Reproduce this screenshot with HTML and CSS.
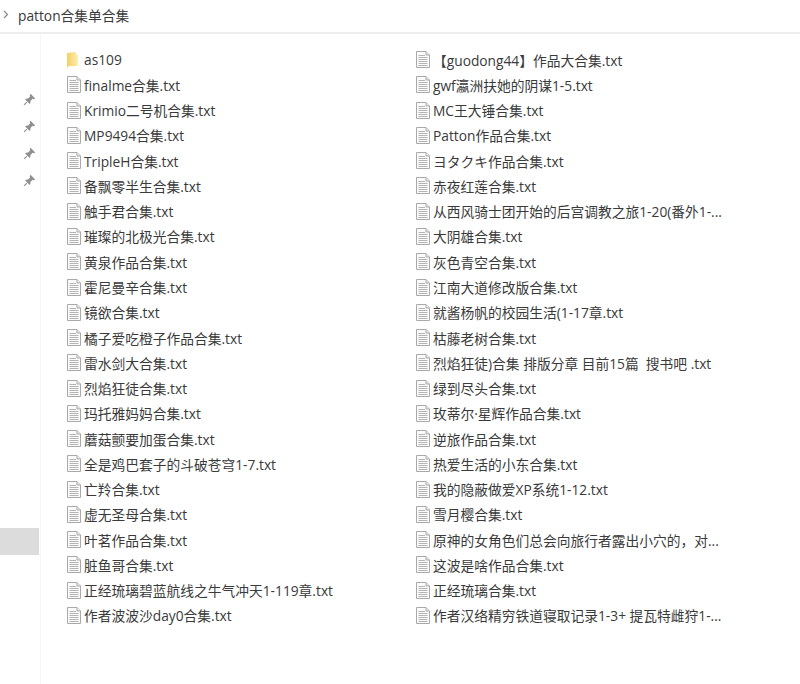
FILE: index.html
```html
<!DOCTYPE html>
<html lang="zh-CN">

<head>
    <meta charset="UTF-8" />
    <title>patton合集单合集</title>
    <link rel="stylesheet" href="styles.css">
</head>

<body>
    <svg class="defs" width="0" height="0">
        <symbol id="txt" viewBox="0 0 14 17">
            <path d="M1 .5H10L13.5 4V16.5H.5V.5Z" fill="#fbfbfb" stroke="#a9a9a9" />
            <path d="M10 .5V4H13.5" fill="#e8e8e8" stroke="#a9a9a9" />
            <path d="M2.5 4.5H9M2.5 6.5H11.5M2.5 8.5H11.5M2.5 10.5H11.5M2.5 12.5H11.5M2.5 14.5H11.5" stroke="#b4b4b4" />
        </symbol>
        <symbol id="pin" viewBox="0 0 12 12">
            <path d="M7 .8L11.2 5 10 5.8 8.9 5.3 6.9 7.3 6.8 9.4 5.9 10 2 6.1 2.7 5.2 4.7 5.1 6.7 3.1 6.2 2Z" fill="#8f8f8f" />
            <path d="M3.6 8.4L1 11" stroke="#8f8f8f" fill="none" />
        </symbol>
    </svg>

    <header class="crumb">
        <svg class="chevron" width="6" height="9" viewBox="0 0 6 9">
            <path d="M1 1L4.5 4.5 1 8" fill="none" stroke="#8a8a8a" stroke-width="1.2" />
        </svg>
        <span class="crumb-title">patton合集单合集</span>
    </header>

    <div class="main">
        <aside class="side">
            <svg class="pin"><use href="#pin" /></svg>
            <svg class="pin"><use href="#pin" /></svg>
            <svg class="pin"><use href="#pin" /></svg>
            <svg class="pin"><use href="#pin" /></svg>
            <div class="side-active"></div>
        </aside>

        <ul class="files">
            <li class="file">
                <svg class="folder" viewBox="0 0 11 16">
                    <defs>
                        <linearGradient id="fold">
                            <stop offset="0" stop-color="#f4cf62" />
                            <stop offset="1" stop-color="#fdeeb2" />
                        </linearGradient>
                    </defs>
                    <path d="M0 1L9 0V2.500H11V14H2L0 16Z" fill="url(#fold)" />
                </svg>
                <span>as109</span>
            </li>
            <li class="file"><svg class="icon"><use href="#txt" /></svg><span>finalme合集.txt</span></li>
            <li class="file"><svg class="icon"><use href="#txt" /></svg><span>Krimio二号机合集.txt</span></li>
            <li class="file"><svg class="icon"><use href="#txt" /></svg><span>MP9494合集.txt</span></li>
            <li class="file"><svg class="icon"><use href="#txt" /></svg><span>TripleH合集.txt</span></li>
            <li class="file"><svg class="icon"><use href="#txt" /></svg><span>备飘零半生合集.txt</span></li>
            <li class="file"><svg class="icon"><use href="#txt" /></svg><span>触手君合集.txt</span></li>
            <li class="file"><svg class="icon"><use href="#txt" /></svg><span>璀璨的北极光合集.txt</span></li>
            <li class="file"><svg class="icon"><use href="#txt" /></svg><span>黄泉作品合集.txt</span></li>
            <li class="file"><svg class="icon"><use href="#txt" /></svg><span>霍尼曼辛合集.txt</span></li>
            <li class="file"><svg class="icon"><use href="#txt" /></svg><span>镜欲合集.txt</span></li>
            <li class="file"><svg class="icon"><use href="#txt" /></svg><span>橘子爱吃橙子作品合集.txt</span></li>
            <li class="file"><svg class="icon"><use href="#txt" /></svg><span>雷水剑大合集.txt</span></li>
            <li class="file"><svg class="icon"><use href="#txt" /></svg><span>烈焰狂徒合集.txt</span></li>
            <li class="file"><svg class="icon"><use href="#txt" /></svg><span>玛托雅妈妈合集.txt</span></li>
            <li class="file"><svg class="icon"><use href="#txt" /></svg><span>蘑菇颤要加蛋合集.txt</span></li>
            <li class="file"><svg class="icon"><use href="#txt" /></svg><span>全是鸡巴套子的斗破苍穹1-7.txt</span></li>
            <li class="file"><svg class="icon"><use href="#txt" /></svg><span>亡羚合集.txt</span></li>
            <li class="file"><svg class="icon"><use href="#txt" /></svg><span>虚无圣母合集.txt</span></li>
            <li class="file"><svg class="icon"><use href="#txt" /></svg><span>叶茗作品合集.txt</span></li>
            <li class="file"><svg class="icon"><use href="#txt" /></svg><span>脏鱼哥合集.txt</span></li>
            <li class="file"><svg class="icon"><use href="#txt" /></svg><span>正经琉璃碧蓝航线之牛气冲天1-119章.txt</span></li>
            <li class="file"><svg class="icon"><use href="#txt" /></svg><span>作者波波沙day0合集.txt</span></li>

            <li class="file"><svg class="icon"><use href="#txt" /></svg><span>【guodong44】作品大合集.txt</span></li>
            <li class="file"><svg class="icon"><use href="#txt" /></svg><span>gwf瀛洲扶她的阴谋1-5.txt</span></li>
            <li class="file"><svg class="icon"><use href="#txt" /></svg><span>MC王大锤合集.txt</span></li>
            <li class="file"><svg class="icon"><use href="#txt" /></svg><span>Patton作品合集.txt</span></li>
            <li class="file"><svg class="icon"><use href="#txt" /></svg><span>ヨタクキ作品合集.txt</span></li>
            <li class="file"><svg class="icon"><use href="#txt" /></svg><span>赤夜红莲合集.txt</span></li>
            <li class="file"><svg class="icon"><use href="#txt" /></svg><span>从西风骑士团开始的后宫调教之旅1-20(番外1-...</span></li>
            <li class="file"><svg class="icon"><use href="#txt" /></svg><span>大阴雄合集.txt</span></li>
            <li class="file"><svg class="icon"><use href="#txt" /></svg><span>灰色青空合集.txt</span></li>
            <li class="file"><svg class="icon"><use href="#txt" /></svg><span>江南大道修改版合集.txt</span></li>
            <li class="file"><svg class="icon"><use href="#txt" /></svg><span>就酱杨帆的校园生活(1-17章.txt</span></li>
            <li class="file"><svg class="icon"><use href="#txt" /></svg><span>枯藤老树合集.txt</span></li>
            <li class="file"><svg class="icon"><use href="#txt" /></svg><span>烈焰狂徒)合集 排版分章 目前15篇&nbsp; 搜书吧 .txt</span></li>
            <li class="file"><svg class="icon"><use href="#txt" /></svg><span>绿到尽头合集.txt</span></li>
            <li class="file"><svg class="icon"><use href="#txt" /></svg><span>玫蒂尔·星辉作品合集.txt</span></li>
            <li class="file"><svg class="icon"><use href="#txt" /></svg><span>逆旅作品合集.txt</span></li>
            <li class="file"><svg class="icon"><use href="#txt" /></svg><span>热爱生活的小东合集.txt</span></li>
            <li class="file"><svg class="icon"><use href="#txt" /></svg><span>我的隐蔽做爱XP系统1-12.txt</span></li>
            <li class="file"><svg class="icon"><use href="#txt" /></svg><span>雪月樱合集.txt</span></li>
            <li class="file"><svg class="icon"><use href="#txt" /></svg><span>原神的女角色们总会向旅行者露出小穴的，对...</span></li>
            <li class="file"><svg class="icon"><use href="#txt" /></svg><span>这波是啥作品合集.txt</span></li>
            <li class="file"><svg class="icon"><use href="#txt" /></svg><span>正经琉璃合集.txt</span></li>
            <li class="file"><svg class="icon"><use href="#txt" /></svg><span>作者汉络精穷铁道寝取记录1-3+ 提瓦特雌狩1-...</span></li>
        </ul>
    </div>
</body>

</html>
```

FILE: styles.css
```css
* {
    box-sizing: border-box;
}

body {
    margin: 0;
    background: #fff;
    color: #3a3a3a;
    font-family: "Open Sans", "Noto Sans CJK SC", sans-serif;
    font-size: 13.75px;
    height: 684px;
    overflow: hidden;
}

.defs {
    display: block;
    height: 0;
}

.crumb {
    display: flex;
    align-items: center;
    gap: 9px;
    height: 34px;
    padding-left: 3px;
    border-bottom: 2px solid #eeeeee;
}

.chevron {
    margin-bottom: 3px;
}

.crumb-title {
    margin-bottom: 1px;
    line-height: 1;
}

.main {
    display: flex;
    height: 650px;
}

.side {
    position: relative;
    display: flex;
    flex-direction: column;
    align-items: center;
    gap: 14px;
    flex: none;
    width: 41px;
    padding: 59px 0 0 18px;
    border-right: 1px solid #f6f6f6;
}

.pin {
    flex: none;
    width: 13px;
    height: 13px;
}

.side-active {
    position: absolute;
    left: 0;
    top: 494px;
    width: 39px;
    height: 27px;
    background: #dcdcdc;
}

.files {
    display: grid;
    grid-auto-flow: column;
    grid-template-rows: repeat(23, 25.27px);
    grid-template-columns: 349px 349px;
    margin: 0;
    padding: 13px 0 0 26px;
    list-style: none;
}

.file {
    display: flex;
    align-items: center;
    gap: 3px;
    white-space: nowrap;
}

.icon {
    flex: none;
    width: 14px;
    height: 17px;
}

.folder {
    flex: none;
    width: 11px;
    height: 16px;
    margin-right: 3px;
}
```
